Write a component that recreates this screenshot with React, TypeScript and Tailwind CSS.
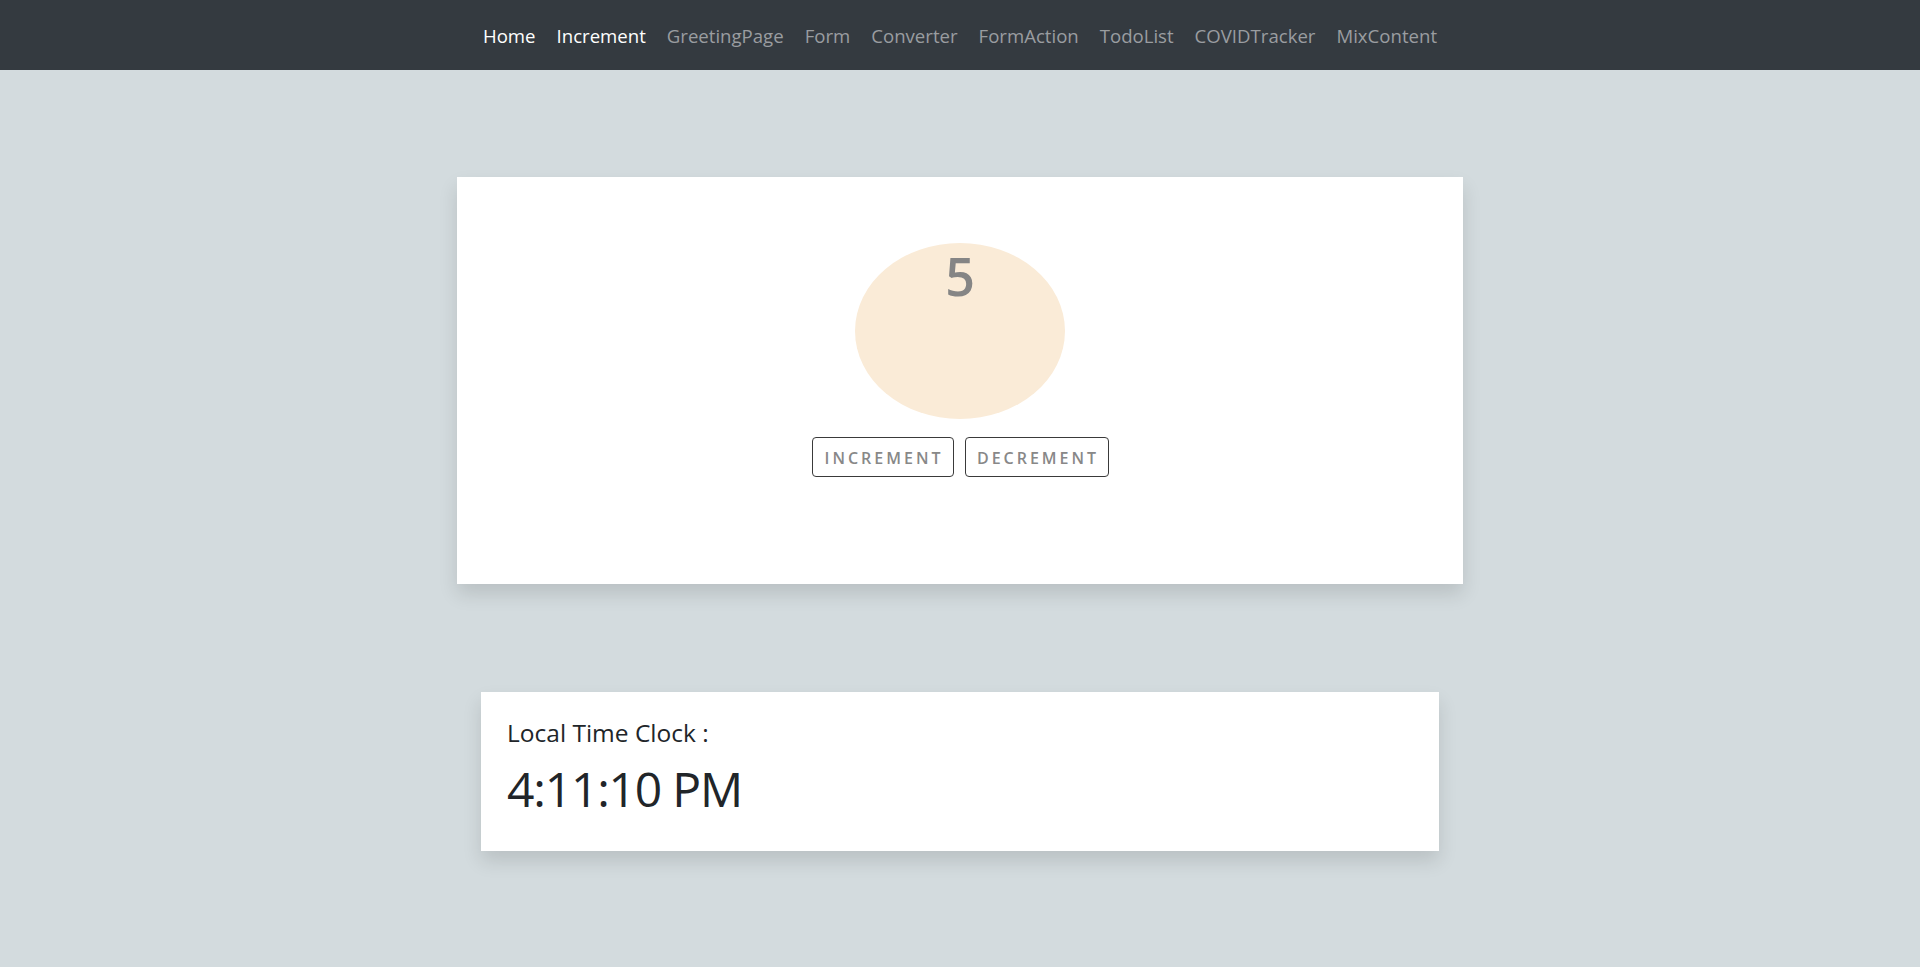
import { useState } from "react";

const links = [
  "Home",
  "Increment",
  "GreetingPage",
  "Form",
  "Converter",
  "FormAction",
  "TodoList",
  "COVIDTracker",
  "MixContent",
];

function Navbar() {
  return (
    <nav className="h-[70px] bg-[#343a40] flex items-center justify-center pt-[2px]">
      <ul className="flex gap-[21px] text-[18.6px] leading-none">
        {links.map((link, index) => (
          <li
            key={link}
            className={index < 2 ? "text-white" : "text-[#9a9da0]"}
          >
            {link}
          </li>
        ))}
      </ul>
    </nav>
  );
}

function Counter() {
  const [count, setCount] = useState(5);

  return (
    <div className="w-[1006px] h-[407px] bg-white shadow-[0_10px_18px_rgba(0,0,0,0.12)] flex flex-col items-center pt-[66px]">
      <div className="w-[210px] h-[176px] rounded-[50%] bg-[#faebd7] flex justify-center pt-[7px]">
        <span className="text-[52px] leading-none font-semibold text-[#858585]">
          {count}
        </span>
      </div>
      <div className="flex gap-[11px] mt-[18px]">
        <button
          className="w-[142px] h-[40px] border border-[#3a3a3a] rounded-[4px] text-[16px] tracking-[3px] font-semibold text-[#888] pl-[3px] pt-[2px]"
          onClick={() => setCount(count + 1)}
        >
          INCREMENT
        </button>
        <button
          className="w-[144px] h-[40px] border border-[#3a3a3a] rounded-[4px] text-[16px] tracking-[3px] font-semibold text-[#888] pl-[3px] pt-[2px]"
          onClick={() => setCount(count - 1)}
        >
          DECREMENT
        </button>
      </div>
    </div>
  );
}

function Clock() {
  return (
    <div className="w-[958px] h-[159px] bg-white shadow-[0_10px_18px_rgba(0,0,0,0.12)] px-[26px] pt-[26px] text-[#212529]">
      <h5 className="text-[24.5px] leading-tight font-medium">
        Local Time Clock :
      </h5>
      <h1 className="text-[48px] leading-tight font-medium tracking-[-1.2px] mt-[10px]">
        4:11:10 PM
      </h1>
    </div>
  );
}

export default function App() {
  return (
    <div
      className="min-h-[967px] bg-[#d3dbde]"
      style={{ fontFamily: '"Open Sans", "Noto Sans", sans-serif' }}
    >
      <Navbar />
      <main className="flex flex-col items-center pt-[107px] gap-[108px]">
        <Counter />
        <Clock />
      </main>
    </div>
  );
}
